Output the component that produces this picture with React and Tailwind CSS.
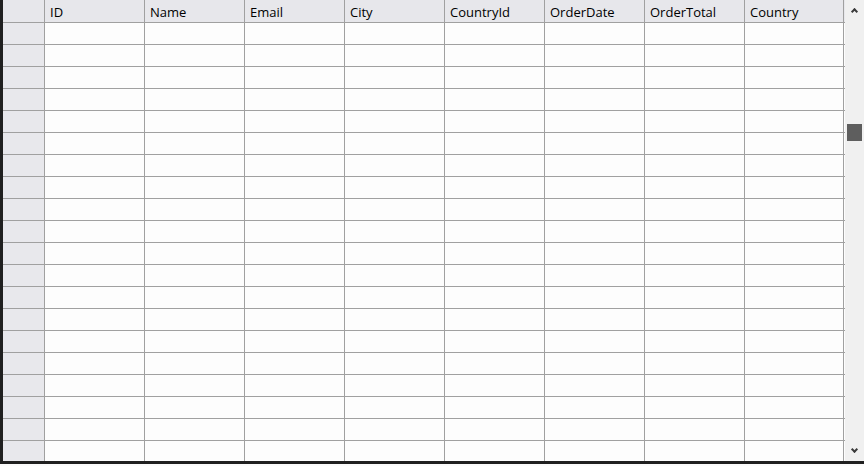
import React from 'react';

const columns = ['ID', 'Name', 'Email', 'City', 'CountryId', 'OrderDate', 'OrderTotal', 'Country'];
const rows = Array.from({ length: 20 }, (_, i) => i);

export default function App() {
  return (
    <div
      className="w-[864px] h-[466px] bg-[#fbfbfb] overflow-hidden"
      style={{ fontFamily: '"Open Sans", "Noto Sans", sans-serif' }}
    >
      <div className="flex h-[464px] border-l-[3px] border-b-[3px] border-[#202020]">
        <div className="w-[842px] overflow-hidden bg-[#fdfdfd]">
          <div className="flex h-[22px] bg-[#e7e7eb]">
            <div className="w-[41px] shrink-0" />
            {columns.map((c, i) => (
              <div
                key={c}
                className={`w-[100px] shrink-0 overflow-hidden border-l border-[#a0a0a0] pl-[5px] text-[13px] leading-[24px] text-black ${i === columns.length - 1 ? 'border-r' : ''}`}
              >
                {c}
              </div>
            ))}
          </div>
          {rows.map((r) => (
            <div key={r} className="flex h-[22px] border-t border-[#a0a0a0]">
              <div className="w-[41px] shrink-0 bg-[#e8e8ec]" />
              {columns.map((c, i) => (
                <div
                  key={c}
                  className={`w-[100px] shrink-0 border-l border-[#a0a0a0] ${i === columns.length - 1 ? 'border-r' : ''}`}
                />
              ))}
            </div>
          ))}
        </div>
        <div className="w-[19px] shrink-0 flex flex-col bg-[#f0f0f0]">
          <div className="h-[20px] shrink-0 flex items-center justify-center">
            <div className="w-[5px] h-[5px] mt-[3px] rotate-45 border-t-2 border-l-2 border-[#3a3a3a]" />
          </div>
          <div className="mt-[104px] ml-[2px] w-[15px] h-[17px] shrink-0 bg-[#5e5e5e]" />
          <div className="flex-1" />
          <div className="h-[20px] shrink-0 flex items-center justify-center">
            <div className="w-[5px] h-[5px] -mt-[3px] rotate-45 border-b-2 border-r-2 border-[#3a3a3a]" />
          </div>
        </div>
      </div>
    </div>
  );
}
